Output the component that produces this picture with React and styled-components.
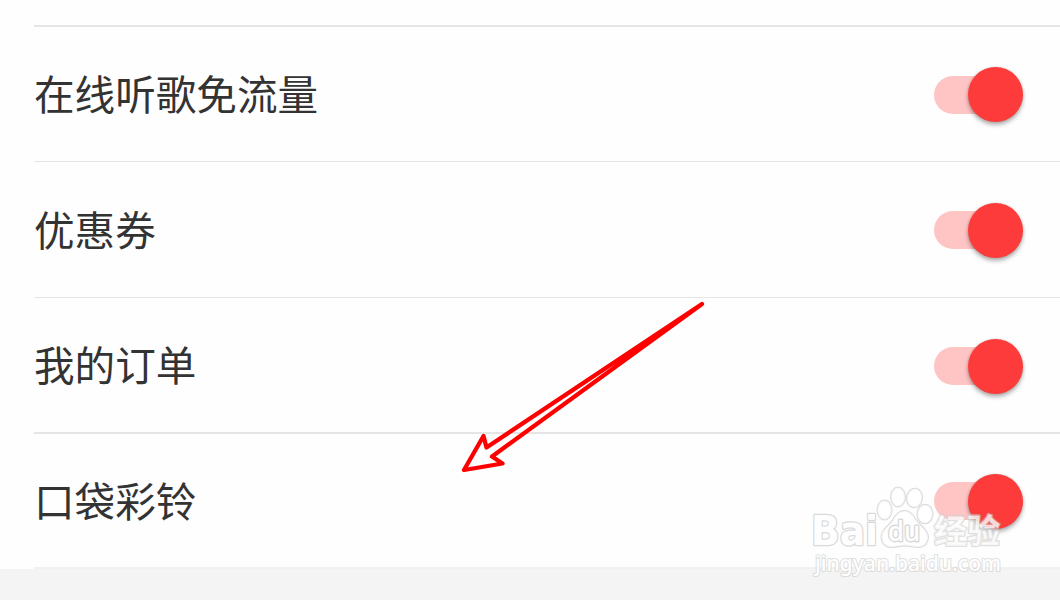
import { useState } from "react";
import styled, { createGlobalStyle } from "styled-components";

const GlobalStyle = createGlobalStyle`
  body {
    margin: 0;
    background: rgb(244, 244, 244);
    overflow: hidden;
  }
`;

const SettingsWrapper = styled.div`
  position: relative;
  width: 1060px;
  height: 600px;
  overflow: hidden;
  background: rgb(244, 244, 244);
  font-family: "Noto Sans CJK SC", sans-serif;
`;

const SettingsList = styled.div`
  background: rgb(254, 254, 254);
  padding-top: 25px;
  padding-left: 34px;
`;

const Divider = styled.div`
  height: 2px;
  background: rgb(229, 229, 229);
`;

const Row = styled.div`
  box-sizing: border-box;
  height: ${(p) => p.$height}px;
  padding-top: 1px;
  padding-right: 37px;
  display: flex;
  align-items: center;
  justify-content: space-between;
  border-bottom: ${(p) => p.$line}px solid
    ${(p) => (p.$last ? "rgb(241, 241, 241)" : "rgb(229, 229, 229)")};
`;

const Label = styled.span`
  margin-bottom: 3px;
  color: rgb(51, 51, 51);
  font-size: 40.6px;
  line-height: 60px;
  white-space: nowrap;
`;

const Switch = styled.button`
  width: 89px;
  height: 55px;
  margin: ${(p) => p.$gap}px 0 0;
  padding: 0;
  border: 0;
  background: none;
  display: flex;
  align-items: center;
  cursor: pointer;
`;

const Track = styled.span`
  width: 89px;
  height: 38px;
  border-radius: 19px;
  display: flex;
  align-items: center;
  justify-content: ${(p) => (p.$on ? "flex-end" : "flex-start")};
  background: ${(p) => (p.$on ? "rgb(255, 196, 196)" : "rgb(200, 200, 200)")};
`;

const Knob = styled.span`
  width: 55px;
  height: 55px;
  flex-shrink: 0;
  border-radius: 50%;
  background: ${(p) => (p.$on ? "rgb(253, 59, 59)" : "rgb(250, 250, 250)")};
  box-shadow: 0 3px 4px rgba(0, 0, 0, 0.3), 0 0 3px rgba(0, 0, 0, 0.12);
`;

const Arrow = styled.svg`
  position: absolute;
  left: 450px;
  top: 290px;
  pointer-events: none;
`;

const Watermark = styled.svg`
  position: absolute;
  left: 800px;
  top: 475px;
  pointer-events: none;

  text,
  path,
  ellipse {
    fill: rgba(255, 255, 255, 0.75);
    stroke: rgb(205, 205, 205);
    stroke-opacity: 0.75;
    stroke-width: 2px;
    stroke-linejoin: round;
    paint-order: stroke;
  }

  .brand {
    font: bold 40px "DejaVu Sans", sans-serif;
    fill: rgb(254, 254, 254);
    stroke-width: 2.6px;
  }

  .du {
    font: 500 27px "Noto Sans", sans-serif;
    fill: rgb(254, 254, 254);
    stroke-width: 3px;
  }

  .cn {
    font: bold 33px "Noto Sans CJK SC", sans-serif;
    stroke-opacity: 0.6;
    stroke-width: 2.6px;
  }

  .url {
    font: 500 21.5px "Noto Sans", sans-serif;
    fill: rgb(254, 254, 254);
    stroke-opacity: 0.6;
    stroke-width: 2.2px;
  }
`;

const items = [
  { name: "在线听歌免流量", height: 135, line: 1, gap: 0 },
  { name: "优惠券", height: 136, line: 1, gap: 0 },
  { name: "我的订单", height: 136, line: 2, gap: 1 },
  { name: "口袋彩铃", height: 135, line: 2, gap: 0 },
];

function SettingRow({ item, last }) {
  const [on, setOn] = useState(true);

  return (
    <Row $height={item.height} $line={item.line} $last={last}>
      <Label>{item.name}</Label>
      <Switch
        role="switch"
        aria-checked={on}
        $gap={item.gap}
        onClick={() => setOn(!on)}
      >
        <Track $on={on}>
          <Knob $on={on} />
        </Track>
      </Switch>
    </Row>
  );
}

export default function App() {
  return (
    <SettingsWrapper>
      <GlobalStyle />
      <SettingsList>
        <Divider />
        {items.map((item, i) => (
          <SettingRow
            key={item.name}
            item={item}
            last={i === items.length - 1}
          />
        ))}
      </SettingsList>
      <Arrow width="270" height="195" viewBox="450 290 270 195">
        <path
          d="M702 304 L486.500 447.500 L483.500 436 L464 470 L502.500 463.500 L492 456.500 Z"
          fill="none"
          stroke="rgb(255, 0, 0)"
          strokeWidth="4.3"
          strokeLinejoin="round"
        />
      </Arrow>
      <Watermark width="215" height="115" viewBox="800 475 215 115">
        <text className="brand" x="811" y="544.500" textLength="67" lengthAdjust="spacingAndGlyphs">
          Bai
        </text>
        <ellipse cx="884.500" cy="510" rx="7" ry="9.500" />
        <ellipse cx="898" cy="497" rx="7" ry="9.500" />
        <ellipse cx="914.500" cy="498" rx="7.500" ry="9.300" transform="rotate(10 914.500 498)" />
        <ellipse cx="925" cy="514" rx="7.500" ry="9.300" />
        <path d="M904.500 511 C899 511 895.500 515 893 520 C889.500 526 881.500 529 881.500 537 C881.500 543 885.500 547 891 547 C897 547 900 545.500 904.500 545.500 C910 545.500 913 547 918.500 547 C925 547 928 542 928 537 C928 530 920 526 916 520 C913 515 910 511 904.500 511 Z" />
        <text className="du" x="888" y="541" textLength="32" lengthAdjust="spacingAndGlyphs">
          du
        </text>
        <text className="cn" x="934" y="543" textLength="66" lengthAdjust="spacingAndGlyphs">
          经验
        </text>
        <text className="url" x="815" y="570.500" textLength="186" lengthAdjust="spacingAndGlyphs">
          jingyan.baidu.com
        </text>
      </Watermark>
    </SettingsWrapper>
  );
}
